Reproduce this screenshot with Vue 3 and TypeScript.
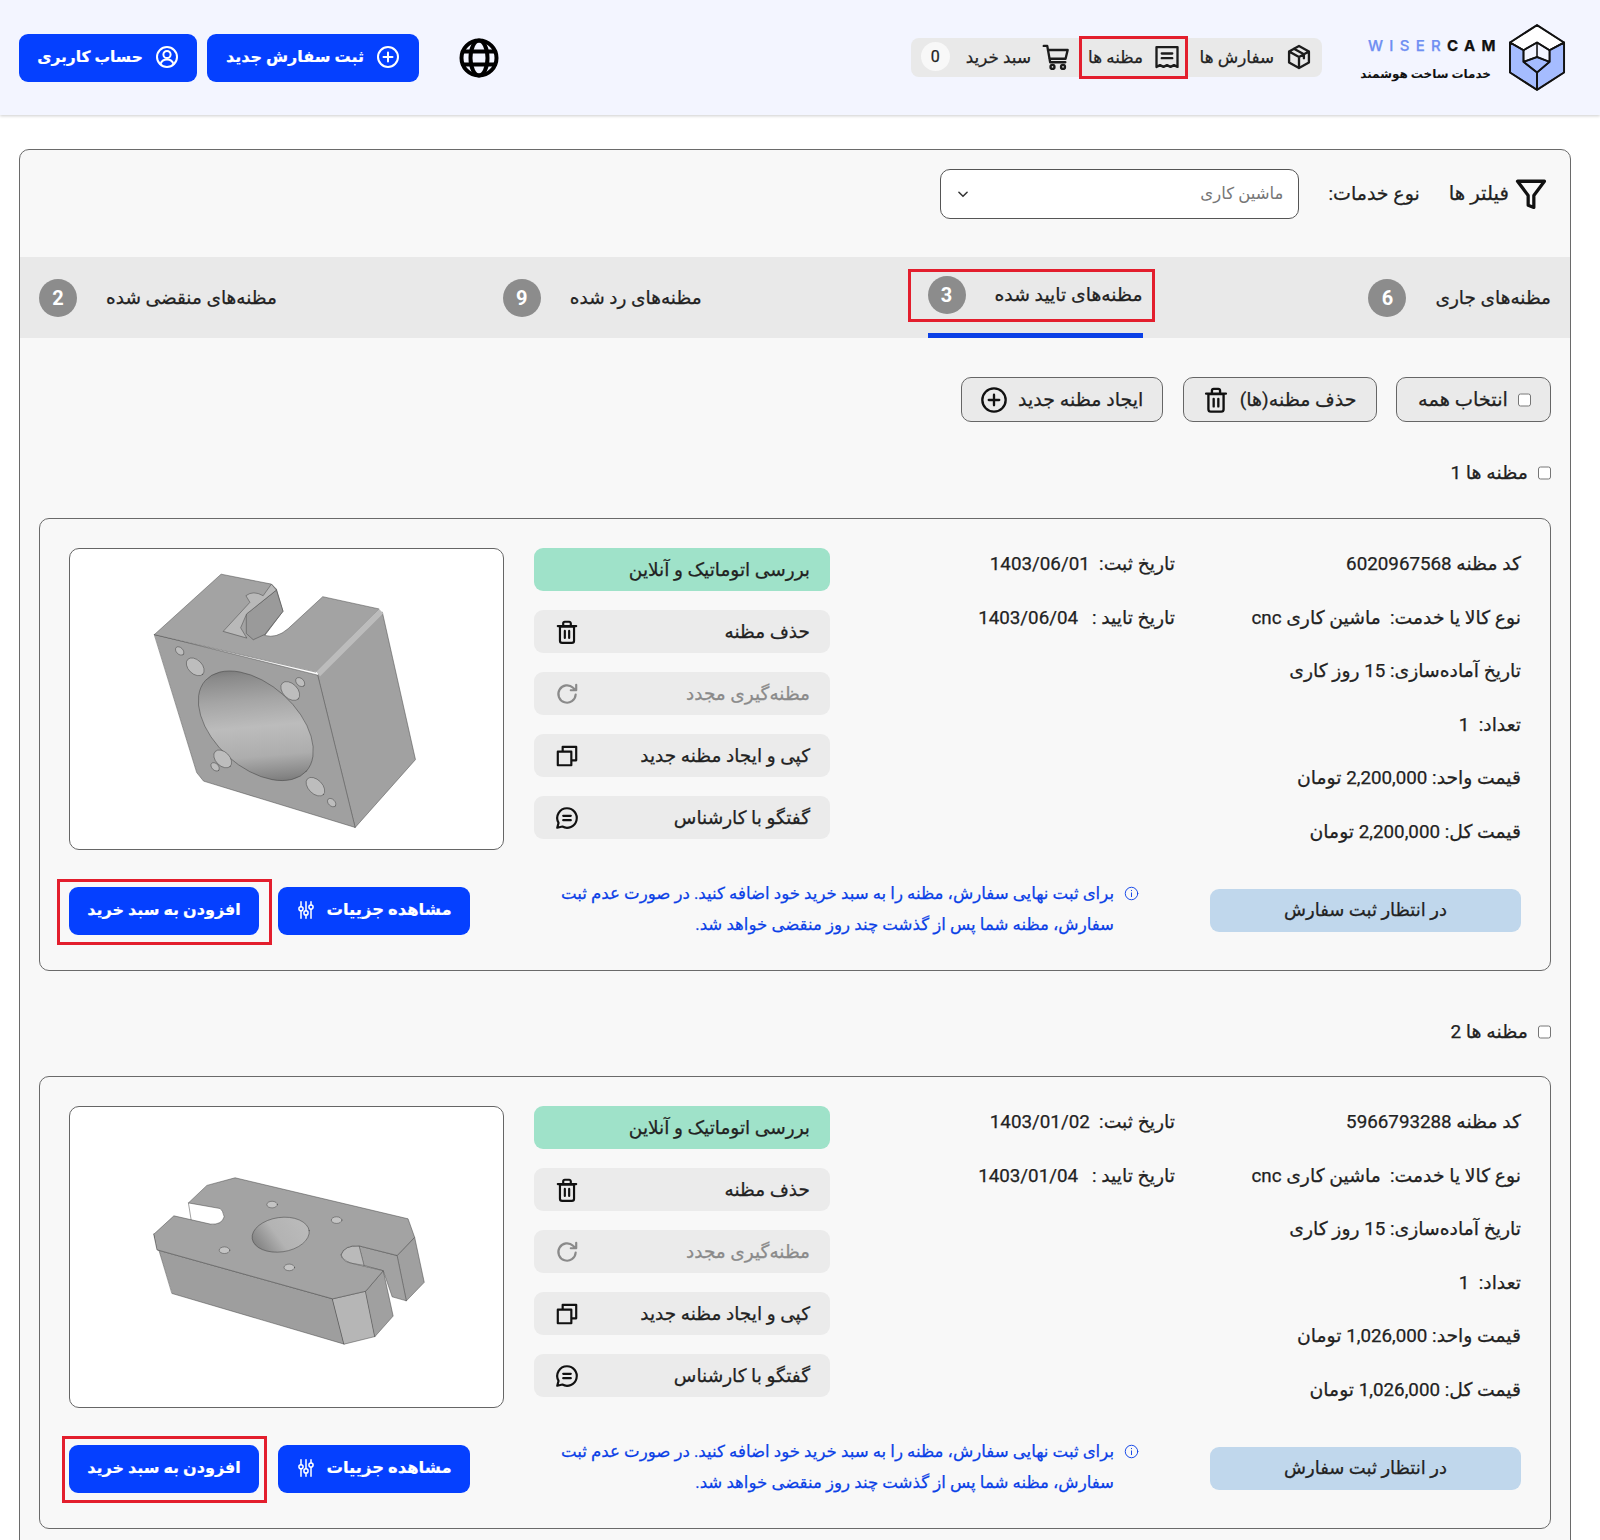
<script setup lang="ts">
const icons: Record<string, string> = {
  box: 'M12 2.5 3.5 7.2v9.6l8.5 4.7 8.500-4.700V7.200z M3.500 7.200 12 12l8.500-4.800 M12 12v9.500 M7.700 4.900l8.500 4.800v3.300',
  receipt: 'M3 3.500h18v17l-3-1.500-3 1.500-3-1.500-3 1.500-3-1.500-3 1.500z M7.500 9h9 M7.500 13h9',
  cart: 'M1.500 2.500h3l2.500 14h13 M5 6h17l-1.800 7.500H6.300',
  plus: 'M12 7.500v9 M7.500 12h9',
  trash: 'M5.500 7h13v13a2 2 0 0 1-2 2h-9a2 2 0 0 1-2-2z M3.500 6.500h17 M8.500 6V4a1.500 1.500 0 0 1 1.500-1.500h4A1.500 1.500 0 0 1 15.500 4v2 M10 11v6.500 M14 11v6.500',
  refresh: 'M20 12.500a8 8 0 1 1-2.400-6.200L20 8.500 M20.500 3.500v5h-5',
  copy: 'M8 8V3.500h12.500V16H16 M3.500 8H16v12.500H3.500z',
  chat: 'M12 3a9 9 0 1 1-4.300 16.900L3 21l1.200-4.500A9 9 0 0 1 12 3z M8.500 10h7 M8.500 14h7',
  sliders: 'M6 2v6 M6 13v9 M12 2v11 M12 18v4 M18 2v4 M18 11v11',
  filter: 'M2.500 3h19l-7.500 10v8.500l-4-1.500v-7z',
  info: 'M12 11v6 M12 7v.5',
}

const tools = [
  { label: 'حذف مظنه', icon: 'trash', off: false },
  { label: 'مظنه‌گیری مجدد', icon: 'refresh', off: true },
  { label: 'کپی و ایجاد مظنه جدید', icon: 'copy', off: false },
  { label: 'گفتگو با کارشناس', icon: 'chat', off: false },
]

const quotes = [
  { id: 1, code: '6020967568', made: '1403/06/01', ok: '1403/06/04', price: '2,200,000' },
  { id: 2, code: '5966793288', made: '1403/01/02', ok: '1403/01/04', price: '1,026,000' },
]

const tabs = [
  { label: 'مظنه‌های جاری', count: 6, active: false },
  { label: 'مظنه‌های تایید شده', count: 3, active: true },
  { label: 'مظنه‌های رد شده', count: 9, active: false },
  { label: 'مظنه‌های منقضی شده', count: 2, active: false },
]
</script>

<template>
  <div class="page" dir="rtl">
    <header class="topbar">
      <div class="top-right">
        <div class="brand">
          <svg class="logo" viewBox="-1 -1 59 69">
            <path d="M28 0 56 18 41 26 28 18 14 26 0 18z" fill="#fff" />
            <path d="M0 18 14 26V38L28 49V67L0 49zM56 18 41 26V38L28 49V67L56 49zM28 33 41 38 28 49 14 38z" fill="#a5bcff" />
            <path d="M28 0 56 18V49L28 67 0 49V18zM0 18 14 26 28 18 41 26 56 18M14 26V38L28 49 41 38V26M28 18V33L14 38M28 33 41 38M28 49V67" fill="none" stroke="#111" stroke-width="1.600" stroke-linejoin="round" />
          </svg>
          <div class="brand-text">
            <div class="brand-name" dir="ltr"><span>WISER</span>CAM</div>
            <div class="brand-sub">خدمات ساخت هوشمند</div>
          </div>
        </div>
        <nav class="nav">
          <a class="nav-item">
            <svg class="nav-icon" viewBox="0 0 24 24"><path :d="icons.box" /></svg>
            سفارش ها
          </a>
          <a class="nav-item current">
            <svg class="nav-icon" viewBox="0 0 24 24"><path :d="icons.receipt" /></svg>
            مظنه ها
            <i class="mark" />
          </a>
          <a class="nav-item">
            <svg class="nav-icon" viewBox="0 0 24 24">
              <path :d="icons.cart" />
              <circle cx="9" cy="20.500" r="1.700" />
              <circle cx="18" cy="20.500" r="1.700" />
            </svg>
            سبد خرید
            <b class="cart-count">0</b>
          </a>
        </nav>
      </div>
      <div class="top-left">
        <svg class="globe" viewBox="0 0 40 40">
          <circle cx="20" cy="20" r="17.500" />
          <ellipse cx="20" cy="20" rx="8.500" ry="17.500" />
          <path d="M4 13.500h32M4 26.500h32" />
        </svg>
        <button class="primary new-order">
          <svg class="btn-icon" viewBox="0 0 24 24"><circle cx="12" cy="12" r="10" /><path :d="icons.plus" /></svg>
          ثبت سفارش جدید
        </button>
        <button class="primary account">
          <svg class="btn-icon" viewBox="0 0 24 24">
            <circle cx="12" cy="12" r="10" />
            <circle cx="12" cy="9.500" r="3.600" />
            <path d="M5.500 19c1-3.200 3.500-4.500 6.500-4.500s5.500 1.300 6.500 4.500" />
          </svg>
          حساب کاربری
        </button>
      </div>
    </header>

    <main class="content">
      <section class="panel">
        <div class="filters">
          <svg class="filter-icon" viewBox="0 0 24 24"><path :d="icons.filter" /></svg>
          <span class="filter-title">فیلتر ها</span>
          <span class="filter-label">نوع خدمات:</span>
          <div class="select">
            ماشین کاری
            <svg class="chevron" viewBox="0 0 12 12"><path d="M2.500 4.500 6 8l3.500-3.500" /></svg>
          </div>
        </div>

        <div class="tabs">
          <div v-for="t in tabs" :key="t.count" class="tab" :class="{ active: t.active }">
            <span>{{ t.label }}</span>
            <b class="tab-count">{{ t.count }}</b>
            <i v-if="t.active" class="mark tab-mark" />
          </div>
        </div>

        <div class="bulk">
          <label class="ghost select-all"><input type="checkbox" /> انتخاب همه</label>
          <button class="ghost with-icon">
            حذف مظنه(ها)
            <svg class="ghost-icon" viewBox="0 0 24 24"><path :d="icons.trash" /></svg>
          </button>
          <button class="ghost with-icon">
            ایجاد مظنه جدید
            <svg class="ghost-icon" viewBox="0 0 24 24"><circle cx="12" cy="12" r="10" /><path :d="icons.plus" /></svg>
          </button>
        </div>

        <div class="list">
          <article v-for="q in quotes" :key="q.id">
            <label class="quote-title"><input type="checkbox" /> مظنه ها {{ q.id }}</label>
            <div class="card">
              <div class="card-top">
                <div class="facts">
                  <div>کد مظنه {{ q.code }}</div>
                  <div>نوع کالا یا خدمت: &nbsp;ماشین کاری cnc</div>
                  <div>تاریخ آماده‌سازی: 15 روز کاری</div>
                  <div>تعداد: &nbsp;1</div>
                  <div>قیمت واحد: {{ q.price }} تومان</div>
                  <div>قیمت کل: {{ q.price }} تومان</div>
                </div>
                <div class="facts">
                  <div>تاریخ ثبت: &nbsp;{{ q.made }}</div>
                  <div>تاریخ تایید : &nbsp;&nbsp;{{ q.ok }}</div>
                </div>
                <div class="tools">
                  <div class="tool review">بررسی اتوماتیک و آنلاین</div>
                  <div v-for="t in tools" :key="t.icon" class="tool" :class="{ off: t.off }">
                    {{ t.label }}
                    <svg class="tool-icon" viewBox="0 0 24 24"><path :d="icons[t.icon]" /></svg>
                  </div>
                </div>
                <div class="preview">
                  <svg v-if="q.id === 1" class="model" viewBox="58 24 1305 906">
                    <defs>
                      <linearGradient id="bore1" gradientUnits="userSpaceOnUse" x1="470" y1="420" x2="770" y2="700">
                        <stop offset="0" stop-color="#6a6a6a" />
                        <stop offset=".12" stop-color="#8a8a8a" />
                        <stop offset=".3" stop-color="#a5a5a5" />
                        <stop offset=".5" stop-color="#bcbcbc" />
                        <stop offset=".72" stop-color="#adadad" />
                        <stop offset=".88" stop-color="#858585" />
                        <stop offset="1" stop-color="#5f5f5f" />
                      </linearGradient>
                    </defs>
                    <g stroke="#444" stroke-width="1.500" stroke-linejoin="round">
                      <path d="M805 405 1000 215 1100 660 918 865z" fill="#a1a1a1" />
                      <path d="M312 282 805 405 918 865 460 725 440 700z" fill="#a0a0a0" />
                      <path d="M312 282 513 100 665 130 680 145 700 212 645 285Q680 295 715 265L820 168 990 205 800 395z" fill="#a3a3a3" />
                      <path d="M990 205 1003 218 812 408 800 395z" fill="#bcbcbc" stroke="none" />
                      <path d="M590 220 680 148 700 212 645 282 610 298 590 280z" fill="#9a9a9a" />
                      <path d="M520 272 600 185 588 165Q610 148 640 165L665 130 680 148 590 220 572 262 590 292z" fill="#b9b9b9" />
                      <ellipse cx="618" cy="558" rx="205" ry="125" transform="rotate(42 618 558)" fill="url(#bore1)" />
                      <g fill="#bdbdbd">
                        <ellipse cx="388" cy="332" rx="15" ry="10" transform="rotate(45 388 332)" />
                        <ellipse cx="435" cy="380" rx="32" ry="21" transform="rotate(45 435 380)" />
                        <ellipse cx="722" cy="453" rx="34" ry="22" transform="rotate(45 722 453)" />
                        <ellipse cx="752" cy="426" rx="16" ry="11" transform="rotate(45 752 426)" />
                        <ellipse cx="518" cy="658" rx="32" ry="21" transform="rotate(45 518 658)" />
                        <ellipse cx="495" cy="682" rx="15" ry="10" transform="rotate(45 495 682)" />
                        <ellipse cx="798" cy="742" rx="34" ry="21" transform="rotate(45 798 742)" />
                        <ellipse cx="847" cy="790" rx="15" ry="10" transform="rotate(45 847 790)" />
                      </g>
                    </g>
                  </svg>
                  <svg v-else class="model" viewBox="58 18 1305 907">
                    <defs>
                      <linearGradient id="bore2" gradientUnits="userSpaceOnUse" x1="620" y1="450" x2="770" y2="370">
                        <stop offset="0" stop-color="#7f7f7f" />
                        <stop offset=".45" stop-color="#b3b3b3" />
                        <stop offset="1" stop-color="#bbb" />
                      </linearGradient>
                    </defs>
                    <g stroke="#444" stroke-width="1.500" stroke-linejoin="round">
                      <path d="M310 402 320 450 850 598 885 735 365 582z" fill="#9e9e9e" />
                      <path d="M850 598 950 575 978 712 885 735z" fill="#b6b6b6" />
                      <path d="M950 575 1003 513 1033 650 978 712z" fill="#a0a0a0" />
                      <path d="M1045 467 1098 412 1127 548 1073 604z" fill="#a0a0a0" />
                      <path d="M930 438 1045 467 1073 604 1030 592 1003 513 945 497z" fill="#a2a2a2" />
                      <path d="M875 465Q885 435 930 438L945 497 905 490Q880 480 875 465z" fill="#bababa" />
                      <path d="M310 402 370 347 480 372Q515 375 522 350 518 330 510 325L414 308 470 255 555 232 1078 356 1098 412 1045 467 930 438Q885 435 875 465 880 485 905 490L1003 513 950 575 850 598 320 450z" fill="#a3a3a3" />
                      <path d="M414 308 422 358" />
                      <ellipse cx="693" cy="404" rx="87" ry="52" transform="rotate(-8 693 404)" fill="url(#bore2)" />
                      <g fill="#c4c4c4">
                        <ellipse cx="667" cy="313" rx="16" ry="10" />
                        <ellipse cx="862" cy="360" rx="16" ry="10" />
                        <ellipse cx="523" cy="451" rx="16" ry="10" />
                        <ellipse cx="719" cy="503" rx="16" ry="10" />
                      </g>
                    </g>
                  </svg>
                </div>
              </div>
              <div class="card-bottom">
                <div class="status">در انتظار ثبت سفارش</div>
                <div class="note">
                  <svg class="note-icon" viewBox="0 0 24 24"><circle cx="12" cy="12" r="10" /><path :d="icons.info" /></svg>
                  <p>
                    برای ثبت نهایی سفارش، مظنه را به سبد خرید خود اضافه کنید. در صورت عدم ثبت<br />
                    سفارش، مظنه شما پس از گذشت چند روز منقضی خواهد شد.
                  </p>
                </div>
                <div class="card-buttons">
                  <button class="primary">
                    مشاهده جزییات
                    <svg class="btn-icon small" viewBox="0 0 24 24">
                      <path :d="icons.sliders" />
                      <circle cx="6" cy="10.500" r="2.500" />
                      <circle cx="12" cy="15.500" r="2.500" />
                      <circle cx="18" cy="8.500" r="2.500" />
                    </svg>
                  </button>
                  <button class="primary">
                    افزودن به سبد خرید
                    <i class="mark" :class="q.id === 1 ? 'cart-mark-a' : 'cart-mark-b'" />
                  </button>
                </div>
              </div>
            </div>
          </article>
        </div>
      </section>
    </main>
  </div>
</template>

<style>
html,
body {
  margin: 0;
  background: #fff;
}
</style>

<style scoped>
.page {
  height: 1540px;
  overflow: hidden;
  font-family: Roboto, "Noto Sans", "DejaVu Sans", sans-serif;
  color: #222;
  font-size: 18.500px;
  line-height: 30px;
  -webkit-text-stroke: 0.25px currentColor;
}
svg {
  flex: none;
  fill: none;
  stroke: currentColor;
  stroke-width: 2;
  stroke-linecap: round;
  stroke-linejoin: round;
}
.topbar {
  height: 115px;
  box-sizing: border-box;
  padding: 0 34px 0 0;
  display: flex;
  align-items: center;
  justify-content: space-between;
  background: #f3f5ff;
  box-shadow: 0 1px 3px rgba(0, 0, 0, 0.2);
}
.top-right {
  display: flex;
  align-items: center;
  gap: 39px;
}
.brand {
  display: flex;
  align-items: center;
  gap: 18px;
  width: 205px;
}
.logo {
  width: 57px;
  height: 67px;
}
.brand-text {
  flex: 1;
  min-width: 0;
  padding-top: 4px;
}
.brand-name {
  font: 700 15px/20px Inter, sans-serif;
  letter-spacing: 6.300px;
  color: #111;
  text-align: left;
  padding-left: 7px;
  white-space: nowrap;
}
.brand-name span {
  font-weight: 500;
  color: #6f8ff2;
}
.brand-sub {
  font-size: 12px;
  line-height: 20px;
  font-weight: 600;
  color: #111;
  margin-top: 8px;
  white-space: nowrap;
  -webkit-text-stroke: 0;
}
.nav {
  width: 411px;
  height: 39px;
  display: flex;
  align-items: stretch;
  background: #e9e9e9;
  border-radius: 8px;
}
.nav-item {
  position: relative;
  display: flex;
  align-items: center;
  gap: 11px;
  padding: 0 9px 2px;
  font-size: 16.800px;
  white-space: nowrap;
}
.nav-item.current {
  width: 109px;
  box-sizing: border-box;
  padding: 0 7px 2px;
  gap: 10px;
}
.nav-item:first-child {
  width: 134px;
  box-sizing: border-box;
}
.nav-icon {
  width: 28px;
  height: 28px;
  color: #1c1c1c;
}
.cart-count {
  width: 29px;
  height: 29px;
  margin-right: 5px;
  border-radius: 50%;
  background: #f8f8f8;
  display: grid;
  place-items: center;
  font-weight: 400;
  font-size: 16px;
}
.mark {
  position: absolute;
  inset: -2px 0;
  border: 3px solid #e31e2d;
  pointer-events: none;
}
.top-left {
  display: flex;
  align-items: center;
  gap: 10px;
  padding-left: 19px;
}
.globe {
  width: 40px;
  height: 40px;
  margin-left: 30px;
  color: #000;
  stroke-width: 4;
}
.primary {
  position: relative;
  box-sizing: border-box;
  height: 48px;
  padding: 0 0 2px;
  display: flex;
  align-items: center;
  justify-content: center;
  gap: 12px;
  border: 0;
  border-radius: 9px;
  background: #0540ff;
  color: #fff;
  font: inherit;
  font-weight: 700;
  font-size: 16px;
  white-space: nowrap;
  -webkit-text-stroke: 0.2px currentColor;
}
.new-order {
  width: 212px;
}
.account {
  width: 178px;
  font-size: 15.500px;
}
.btn-icon {
  width: 24px;
  height: 24px;
}
.btn-icon.small {
  width: 20px;
  height: 20px;
  stroke-width: 1.800;
}
.content {
  padding: 34px 29px 0 19px;
}
.panel {
  border: 1px solid #6a6a6a;
  border-radius: 10px;
  background: #f8f8f8;
  padding-bottom: 60px;
}
.filters {
  height: 107px;
  box-sizing: border-box;
  padding: 0 22px 19px 0;
  display: flex;
  align-items: center;
}
.filter-icon {
  width: 34px;
  height: 34px;
  stroke-width: 2.300;
  color: #111;
}
.filter-title {
  margin-right: 5px;
  font-size: 19.800px;
}
.filter-label {
  margin-right: 29px;
  font-size: 19px;
}
.select {
  width: 359px;
  height: 50px;
  margin-right: 29px;
  box-sizing: border-box;
  padding: 0 15px;
  display: flex;
  align-items: center;
  justify-content: space-between;
  background: #fff;
  border: 1px solid #555;
  border-radius: 10px;
  color: #777;
  font-size: 16.500px;
  -webkit-text-stroke: 0;
}
.chevron {
  width: 14px;
  height: 14px;
  color: #333;
  stroke-width: 1.300;
}
.tabs {
  height: 81px;
  padding: 0 19px;
  display: flex;
  justify-content: space-between;
  background: #e9e9e9;
}
.tab {
  position: relative;
  box-sizing: border-box;
  display: flex;
  align-items: center;
  gap: 29px;
  white-space: nowrap;
}
.tab.active {
  border-bottom: 5px solid #0a3fe6;
  font-size: 18.800px;
}
.tab-count {
  width: 38px;
  height: 38px;
  border-radius: 50%;
  background: #8c8c8c;
  color: #fff;
  display: grid;
  place-items: center;
  font-size: 20px;
  -webkit-text-stroke: 0;
}
.tab-mark {
  inset: 12px -12px 11px -20px;
}
.bulk {
  padding: 39px 19px 0 0;
  display: flex;
  gap: 19.500px;
}
.ghost {
  height: 45px;
  box-sizing: border-box;
  padding: 0 19px;
  display: flex;
  align-items: center;
  gap: 10px;
  background: #eaeaea;
  border: 1px solid #666;
  border-radius: 10px;
  color: inherit;
  font: inherit;
  font-size: 19px;
  white-space: nowrap;
}
.select-all {
  padding-left: 21px;
  font-size: 19.400px;
}
.ghost.with-icon {
  gap: 10px;
  padding-left: 18px;
}
.ghost input,
.quote-title input {
  width: 13px;
  height: 14px;
  margin: 0;
}
.ghost-icon {
  width: 28px;
  height: 28px;
  color: #111;
}
.list {
  padding: 36px 19px 0 19px;
  display: flex;
  flex-direction: column;
  gap: 46px;
}
.quote-title {
  display: flex;
  align-items: center;
  gap: 10px;
  font-size: 19px;
  margin-bottom: 30px;
}
.card {
  height: 453px;
  box-sizing: border-box;
  padding: 29px 29px 0;
  border: 1px solid #6a6a6a;
  border-radius: 10px;
}
article + article .card {
  margin-top: -1px;
}
.card-top {
  display: grid;
  grid-template-columns: 346px 345px 326px 435px;
  height: 302px;
}
.facts {
  padding-top: 1px;
  display: flex;
  flex-direction: column;
  gap: 23.500px;
  font-size: 18.800px;
}
.tools {
  width: 296px;
  display: flex;
  flex-direction: column;
  gap: 19px;
}
.tool {
  height: 43px;
  box-sizing: border-box;
  padding: 0 20px;
  display: flex;
  align-items: center;
  justify-content: space-between;
  background: #ebebeb;
  border-radius: 9px;
}
.tool.review {
  background: #9fe2c9;
}
.tool.off {
  color: #8a8a8a;
}
.tool-icon {
  width: 26px;
  height: 26px;
  color: #111;
}
.tool.off .tool-icon {
  color: #8a8a8a;
}
.preview {
  background: #fff;
  border: 1px solid #666;
  border-radius: 10px;
  overflow: hidden;
}
.model {
  display: block;
  width: 100%;
  height: 100%;
  stroke: none;
}
.card-bottom {
  margin-top: 32px;
  display: flex;
  align-items: center;
}
.status {
  width: 311px;
  height: 43px;
  margin-bottom: 2px;
  display: grid;
  place-items: center;
  background: #c0d7ec;
  border-radius: 9px;
  font-size: 18px;
}
.note {
  width: 578px;
  margin-top: -4px;
  margin-right: 71px;
  display: flex;
  gap: 10px;
  color: #0a3fe6;
  font-size: 16.600px;
  line-height: 31px;
}
.note p {
  margin: 0;
  white-space: nowrap;
}
.note-icon {
  width: 15px;
  height: 15px;
  margin-top: 8px;
  stroke-width: 1.500;
}
.card-buttons {
  margin-right: 91px;
  display: flex;
  gap: 19px;
}
.card-buttons .primary {
  width: 192px;
  gap: 10px;
  font-size: 16.400px;
}
.card-buttons .primary:last-child {
  width: 190px;
  font-size: 16px;
}
.cart-mark-a {
  inset: -8px -13px -10px -12px;
}
.cart-mark-b {
  inset: -9px -8px -10px -7px;
}
</style>
